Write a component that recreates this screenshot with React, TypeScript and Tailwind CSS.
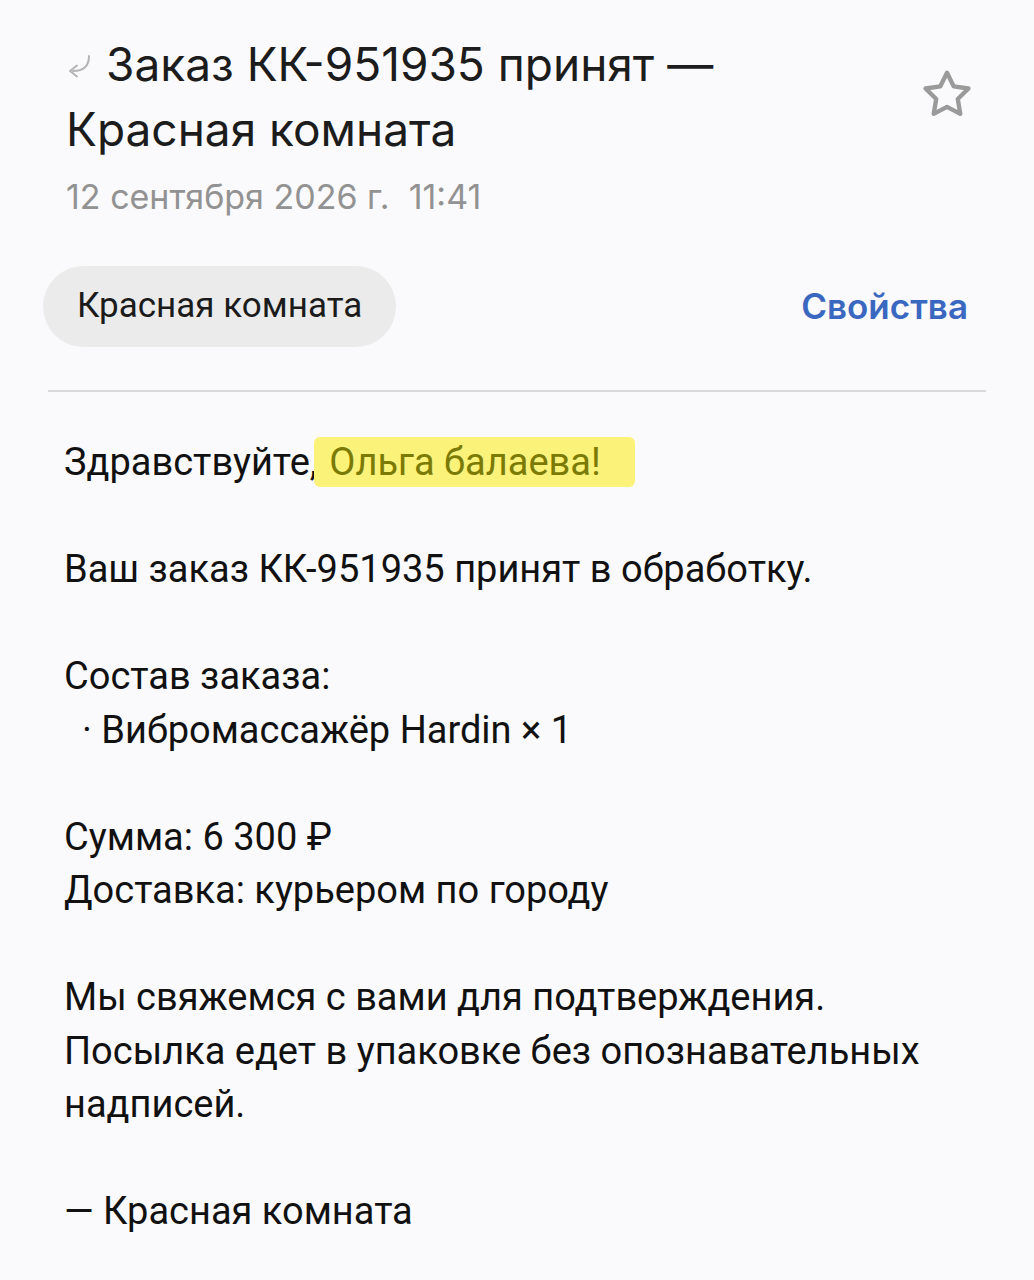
export default function App() {
  const body = "font-['Roboto',sans-serif]"
  return (
    <div className="min-h-[1280px] w-[1034px] bg-[#fafafc] text-[#1b1b1b]">
      {/* заголовок письма */}
      <div className="flex items-start justify-between pl-[66px] pr-[58px] pt-[32px]">
        <div>
          <h1 className="font-['Inter',sans-serif] text-[46px] font-normal leading-[65px] text-[#1c1c1c]">
            <span className="-ml-[2px] mr-[12px] inline-block align-[2px]">
              <svg width="30" height="26" viewBox="0 0 30 26" fill="none" stroke="#b4b4b4" strokeWidth="2" strokeLinecap="round" strokeLinejoin="round">
                <path d="M25 3 C25 13 20 18 9 18" />
                <path d="M13 12.5 L6 18 L13 23.5" />
              </svg>
            </span>
            Заказ КК-951935 принят —<br />
            Красная комната
          </h1>
          <div className="mt-[13px] font-['Inter',sans-serif] text-[34px] leading-[44px] text-[#929292]">
            12 сентября 2026 г.&nbsp;&nbsp;11:41
          </div>
        </div>
        <svg className="mt-[34px]" width="58" height="58" viewBox="0 0 24 24" fill="none" stroke="#9a9a9a" strokeWidth="1.8" strokeLinejoin="round">
          <path d="M12 2.8l2.75 5.6 6.15.9-4.45 4.35 1.05 6.15L12 16.9l-5.5 2.9 1.05-6.15L3.1 9.3l6.15-.9z" />
        </svg>
      </div>

      {/* отправитель и свойства */}
      <div className="mt-[47px] flex items-center justify-between pl-[43px] pr-[66px]">
        <div className={`${body} flex h-[81px] items-center rounded-full bg-[#ebebeb] px-[34px] text-[35px] text-[#1b1b1b]`}>
          Красная комната
        </div>
        <div className="font-['Inter',sans-serif] text-[35px] font-semibold text-[#3a68c0]">Свойства</div>
      </div>

      <div className="mx-[48px] mt-[43px] h-[2px] bg-[#dadada]" />

      {/* текст письма */}
      <div className={`${body} w-[960px] pl-[64px] pt-[44px] text-[38px] leading-[53.5px] text-[#111111]`}>
        <p>
          Здравствуйте,<span className="-ml-[3px] rounded-[6px] bg-[#fbf27a] pl-[15px] pr-[34px] py-[3px] text-[#7a7a05]">Ольга балаева!</span>
        </p>
        <p className="mt-[53.5px]">Ваш заказ КК-951935 принят в обработку.</p>
        <p className="mt-[53.5px]">Состав заказа:</p>
        <p className="pl-[18px]">· Вибромассажёр Hardin × 1</p>
        <p className="mt-[53.5px]">Сумма: 6 300 ₽</p>
        <p>Доставка: курьером по городу</p>
        <p className="mt-[53.5px]">Мы свяжемся с вами для подтверждения.</p>
        <p>Посылка едет в упаковке без опознавательных надписей.</p>
        <p className="mt-[53.5px]">— Красная комната</p>
      </div>
    </div>
  )
}
